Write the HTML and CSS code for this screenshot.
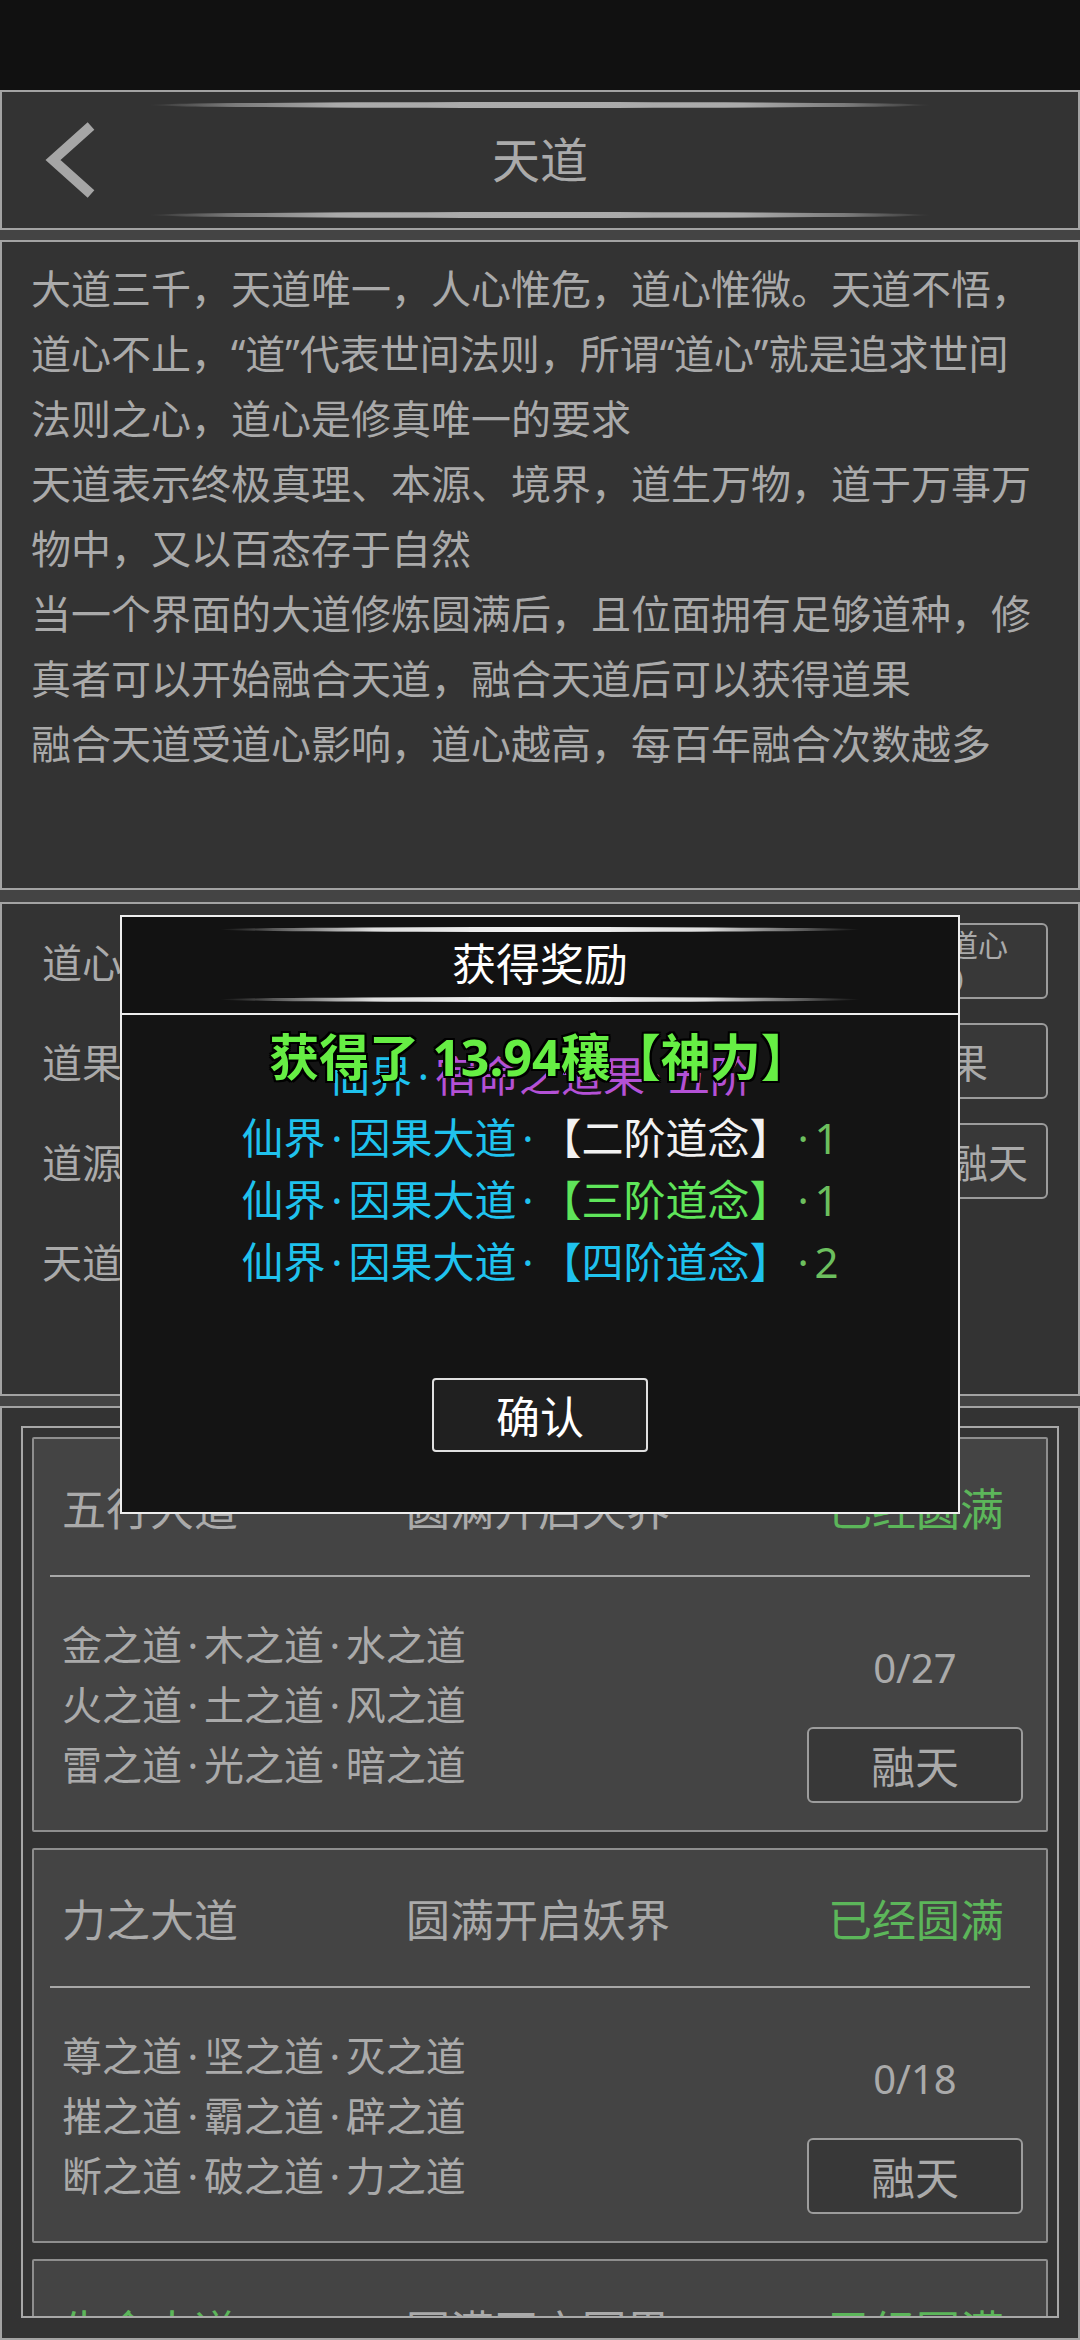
FILE: index.html
```html
<!DOCTYPE html>
<html lang="zh-CN">
<head>
  <meta charset="utf-8">
  <title>天道</title>
  <link rel="stylesheet" href="styles.css">
</head>
<body>
  <div class="statusbar"></div>

  <div class="panel header">
    <svg class="back" width="52" height="80" viewBox="0 0 52 80">
      <polyline points="48,6 10,40 48,74" fill="none" stroke="#a6a6a6" stroke-width="10" stroke-linejoin="miter"/>
    </svg>
    <div class="glow-line top"></div>
    <h1 class="title">天道</h1>
    <div class="glow-line bottom"></div>
  </div>

  <div class="panel intro">
    <p>大道三千，天道唯一，人心惟危，道心惟微。天道不悟，道心不止，“道”代表世间法则，所谓“道心”就是追求世间法则之心，道心是修真唯一的要求</p>
    <p>天道表示终极真理、本源、境界，道生万物，道于万事万物中，又以百态存于自然</p>
    <p>当一个界面的大道修炼圆满后，且位面拥有足够道种，修真者可以开始融合天道，融合天道后可以获得道果</p>
    <p>融合天道受道心影响，道心越高，每百年融合次数越多</p>
  </div>

  <div class="panel stats">
    <div class="stat-row">
      <span>道心：3</span>
      <button class="stat-btn two-line"><span>提升道心</span><small>(0)</small></button>
    </div>
    <div class="stat-row">
      <span>道果：0</span>
      <button class="stat-btn">道果</button>
    </div>
    <div class="stat-row">
      <span>道源：0</span>
      <button class="stat-btn">一键融天</button>
    </div>
    <div class="stat-row">
      <span>天道：0</span>
    </div>
  </div>

  <div class="panel realms">
    <div class="realm-list">
      <div class="realm-card">
        <div class="realm-head">
          <span class="realm-name">五行大道</span>
          <span class="realm-goal">圆满开启天界</span>
          <span class="realm-state done">已经圆满</span>
        </div>
        <div class="realm-divider"></div>
        <div class="realm-body">
          <div class="realm-paths">
            <div>金之道<span class="dot">·</span>木之道<span class="dot">·</span>水之道</div>
            <div>火之道<span class="dot">·</span>土之道<span class="dot">·</span>风之道</div>
            <div>雷之道<span class="dot">·</span>光之道<span class="dot">·</span>暗之道</div>
          </div>
          <div class="realm-side">
            <div class="realm-count">0/27</div>
            <button class="fuse-btn">融天</button>
          </div>
        </div>
      </div>

      <div class="realm-card">
        <div class="realm-head">
          <span class="realm-name">力之大道</span>
          <span class="realm-goal">圆满开启妖界</span>
          <span class="realm-state done">已经圆满</span>
        </div>
        <div class="realm-divider"></div>
        <div class="realm-body">
          <div class="realm-paths">
            <div>尊之道<span class="dot">·</span>坚之道<span class="dot">·</span>灭之道</div>
            <div>摧之道<span class="dot">·</span>霸之道<span class="dot">·</span>辟之道</div>
            <div>断之道<span class="dot">·</span>破之道<span class="dot">·</span>力之道</div>
          </div>
          <div class="realm-side">
            <div class="realm-count">0/18</div>
            <button class="fuse-btn">融天</button>
          </div>
        </div>
      </div>

      <div class="realm-card">
        <div class="realm-head">
          <span class="realm-name done">生命大道</span>
          <span class="realm-goal">圆满开启冥界</span>
          <span class="realm-state done">已经圆满</span>
        </div>
        <div class="realm-divider"></div>
      </div>
    </div>
  </div>

  <div class="modal">
    <div class="modal-head">
      <div class="modal-line"></div>
      <div class="modal-title">获得奖励</div>
      <div class="modal-line"></div>
    </div>
    <div class="modal-body">
      <div class="reward-list">
        <div><span class="c-cyan">仙界<span class="dot">·</span></span><span class="c-purple">宿命之道果<span class="dot">·</span>五阶</span></div>
        <div><span class="c-cyan">仙界<span class="dot">·</span>因果大道<span class="dot">·</span></span><span class="c-white">【二阶道念】</span><span class="c-green"><span class="dot">·</span>1</span></div>
        <div><span class="c-cyan">仙界<span class="dot">·</span>因果大道<span class="dot">·</span></span><span class="c-lime">【三阶道念】</span><span class="c-green"><span class="dot">·</span>1</span></div>
        <div><span class="c-cyan">仙界<span class="dot">·</span>因果大道<span class="dot">·</span>【四阶道念】</span><span class="c-green"><span class="dot">·</span>2</span></div>
      </div>
      <div class="toast">获得了 13.94穰【神力】</div>
      <button class="confirm">确认</button>
    </div>
  </div>
</body>
</html>
```

FILE: styles.css
```css
body {
  margin: 0;
  width: 1080px;
  height: 2340px;
  overflow: hidden;
  position: relative;
  background: #444;
  color: #aaa;
  font-family: "Noto Sans", "Noto Sans CJK SC", sans-serif;
  text-spacing-trim: space-all;
}

.statusbar {
  height: 90px;
  background: #111;
}

.panel {
  box-sizing: border-box;
  background: #333;
  border: 2px solid #a3a3a3;
}

.dot {
  padding: 0 0.14em;
}

/* header */
.header {
  height: 140px;
  padding: 10px 0;
  display: grid;
  grid-template-columns: 147px 1fr 147px;
  grid-template-rows: 6px 1fr 6px;
}

.back {
  grid-column: 1;
  grid-row: 1 / 4;
  align-self: center;
  margin-left: 41px;
}

.glow-line {
  grid-column: 2;
  border-radius: 50%;
  background: linear-gradient(90deg, rgba(170,170,170,0) 0%, #777 10%, #aaa 24%, #ababab 50%, #aaa 76%, #777 90%, rgba(170,170,170,0) 100%);
}

.glow-line.top { grid-row: 1; }
.glow-line.bottom { grid-row: 3; }

.title {
  grid-column: 2;
  grid-row: 2;
  align-self: center;
  margin: 0;
  text-align: center;
  font-size: 48px;
  font-weight: normal;
  line-height: 1;
  color: #aaa;
}

/* intro text */
.intro {
  margin-top: 10px;
  height: 650px;
  padding: 14px 39px 0 29px;
  font-size: 40px;
  line-height: 65px;
}

.intro p {
  margin: 0;
}

/* stats */
.stats {
  margin-top: 12px;
  height: 494px;
  padding: 7px 30px 0 40px;
}

.stat-row {
  height: 100px;
  display: flex;
  align-items: center;
  justify-content: space-between;
  font-size: 40px;
}

.stat-btn {
  width: 200px;
  height: 76px;
  box-sizing: border-box;
  padding: 0;
  border: 2px solid #9c9c9c;
  border-radius: 6px;
  background: #383838;
  color: #aaa;
  font-family: inherit;
  font-size: 40px;
  display: flex;
  flex-direction: column;
  align-items: center;
  justify-content: center;
}

.stat-btn.two-line {
  font-size: 30px;
  line-height: 33px;
}

.stat-btn small {
  font-size: 26px;
}

/* realm list */
.realms {
  margin-top: 10px;
  height: 934px;
  padding: 18px 19px 0;
}

.realm-list {
  height: 892px;
  box-sizing: border-box;
  border: 2px solid #a8a8a8;
  padding: 9px;
  overflow: hidden;
  display: flex;
  flex-direction: column;
  gap: 16px;
}

.realm-card {
  flex-shrink: 0;
  height: 395px;
  box-sizing: border-box;
  border: 2px solid #8e8e8e;
  border-radius: 2px;
  background: #444;
}

.realm-head {
  height: 136px;
  padding: 0 42px 0 28px;
  display: grid;
  grid-template-columns: 1fr auto 1fr;
  align-items: center;
  font-size: 44px;
}

.realm-goal {
  margin-left: 10px;
}

.realm-state {
  justify-self: end;
}

.done {
  color: #5cb65a;
}

.realm-divider {
  height: 2px;
  margin: 0 16px;
  background: #a8a8a8;
}

.realm-body {
  display: flex;
  justify-content: space-between;
  padding: 0 23px 0 28px;
}

.realm-paths {
  padding-top: 38px;
  font-size: 40px;
  line-height: 60px;
}

.realm-side {
  width: 216px;
  display: flex;
  flex-direction: column;
  align-items: center;
}

.realm-count {
  margin-top: 61px;
  font-size: 40px;
  line-height: 60px;
}

.fuse-btn {
  margin-top: 29px;
  width: 216px;
  height: 76px;
  box-sizing: border-box;
  border: 2px solid #9c9c9c;
  border-radius: 6px;
  background: #383838;
  color: #aaa;
  font-family: inherit;
  font-size: 44px;
}

/* reward dialog */
.modal {
  position: absolute;
  left: 120px;
  top: 915px;
  width: 840px;
  height: 599px;
  box-sizing: border-box;
  border: 2px solid #eee;
  background: #141414;
  display: flex;
  flex-direction: column;
}

.modal-head {
  height: 98px;
  box-sizing: border-box;
  padding-top: 10px;
  border-bottom: 2px solid #eee;
  background: #121212;
  display: flex;
  flex-direction: column;
  align-items: center;
}

.modal-line {
  width: 640px;
  height: 5px;
  border-radius: 50%;
  background: linear-gradient(90deg, rgba(255,255,255,0) 0%, #555 8%, #ddd 24%, #f4f4f4 50%, #ddd 76%, #555 92%, rgba(255,255,255,0) 100%);
}

.modal-title {
  font-size: 44px;
  line-height: 65px;
  color: #fff;
}

.modal-body {
  position: relative;
  flex: 1;
  display: flex;
  flex-direction: column;
  align-items: center;
}

.reward-list {
  padding-top: 30px;
  font-size: 42px;
  line-height: 62px;
  text-align: center;
}

.c-cyan { color: #1fc2ee; }
.c-purple { color: #b451d6; }
.c-white { color: #f2f2f2; }
.c-lime { color: #5fe55a; }
.c-green { color: #6cbf5e; }

.toast {
  position: absolute;
  left: 0;
  right: 0;
  top: 12px;
  text-align: center;
  font-size: 50px;
  line-height: 60px;
  font-weight: bold;
  color: #66ee44;
  text-shadow: 2px 0 #000, -2px 0 #000, 0 2px #000, 0 -2px #000, 2px 2px #000, -2px -2px #000, 2px -2px #000, -2px 2px #000;
}

.confirm {
  margin-top: 85px;
  width: 216px;
  height: 74px;
  box-sizing: border-box;
  border: 2px solid #e0e0e0;
  border-radius: 4px;
  background: #202020;
  color: #fff;
  font-family: inherit;
  font-size: 44px;
}
```
